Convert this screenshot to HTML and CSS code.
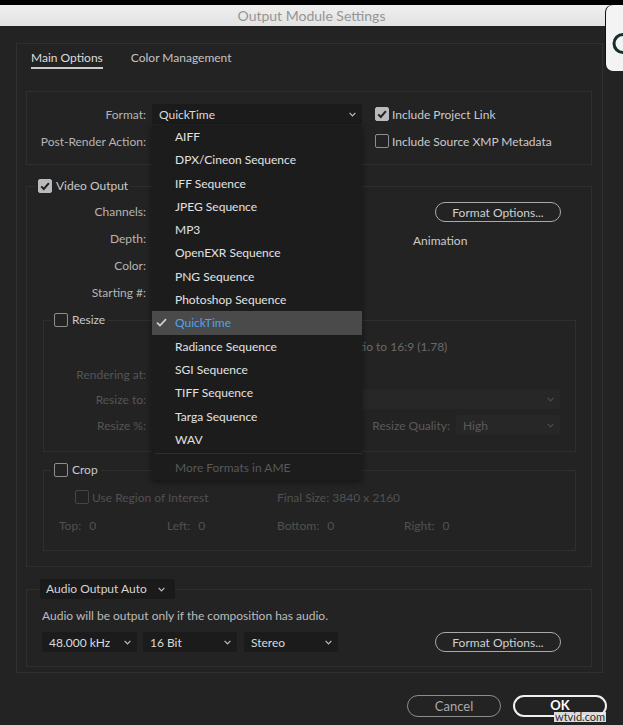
FILE: index.html
```html
<!DOCTYPE html>
<html lang="en">
<head>
<meta charset="utf-8">
<title>Output Module Settings</title>
<link rel="stylesheet" href="styles.css">
</head>
<body>
<div class="screen">
  <div class="topstrip"></div>
  <div class="titlebar">Output Module Settings</div>
  <div class="dialog">
    <div class="panel">
      <div class="tabs">
        <span class="tab active">Main Options</span>
        <span class="tab">Color Management</span>
      </div>

      <div class="fmt-box">
        <div class="row">
          <span class="lbl">Format:</span>
          <div class="dd"><span>QuickTime</span><svg class="chev" width="7" height="5" viewBox="0 0 7 5"><path d="M0.6 0.8 L3.5 3.8 L6.4 0.8"/></svg></div>
          <label class="chk"><span class="cb on"><svg width="14" height="14" viewBox="0 0 14 14"><path d="M3.2 7.4 L5.8 10 L10.9 4.2"/></svg></span>Include Project Link</label>
        </div>
        <div class="row">
          <span class="lbl">Post-Render Action:</span>
          <div class="dd"></div>
          <label class="chk"><span class="cb"></span>Include Source XMP Metadata</label>
        </div>
      </div>

      <fieldset class="video">
        <legend><span class="cb on"><svg width="14" height="14" viewBox="0 0 14 14"><path d="M3.2 7.4 L5.8 10 L10.9 4.2"/></svg></span>Video Output</legend>
        <div class="vtop">
          <div class="vcol">
            <div class="row"><span class="lbl">Channels:</span><div class="dd"></div></div>
            <div class="row"><span class="lbl">Depth:</span><div class="dd"></div></div>
            <div class="row"><span class="lbl">Color:</span><div class="dd"></div></div>
            <div class="row"><span class="lbl">Starting #:</span><div class="dd"></div></div>
          </div>
          <div class="vright">
            <button class="btn fmt-btn">Format Options...</button>
            <div class="codec">Animation</div>
          </div>
        </div>

        <fieldset class="sub resize">
          <legend><span class="cb"></span>Resize</legend>
          <div class="rz-row first">
            <span class="lbl"></span>
            <span class="cb dim lock"></span><span class="lock-txt">Lock Aspect Ratio to 16:9 (1.78)</span>
          </div>
          <div class="rz-row r2"><span class="lbl">Rendering at:</span></div>
          <div class="rz-row r3"><span class="lbl">Resize to:</span>
            <div class="dd dis wide"><span></span><svg class="chev" width="7" height="5" viewBox="0 0 7 5"><path d="M0.6 0.8 L3.5 3.8 L6.4 0.8"/></svg></div>
          </div>
          <div class="rz-row r4"><span class="lbl">Resize %:</span>
            <div class="rq">
              <span class="rq-lbl">Resize Quality:</span>
              <div class="dd dis small"><span>High</span><svg class="chev" width="7" height="5" viewBox="0 0 7 5"><path d="M0.6 0.8 L3.5 3.8 L6.4 0.8"/></svg></div>
            </div>
          </div>
        </fieldset>

        <fieldset class="sub crop">
          <legend><span class="cb"></span>Crop</legend>
          <div class="cr-row c1">
            <span class="roi"><span class="cb dim"></span>Use Region of Interest</span>
            <span>Final Size: 3840 x 2160</span>
          </div>
          <div class="cr-row c2">
            <span>Top:<b>0</b></span>
            <span>Left:<b>0</b></span>
            <span>Bottom:<b>0</b></span>
            <span>Right:<b>0</b></span>
          </div>
        </fieldset>
      </fieldset>

      <fieldset class="audio">
        <legend>
          <div class="dd aud-dd"><span>Audio Output Auto</span><svg class="chev" width="7" height="5" viewBox="0 0 7 5"><path d="M0.6 0.8 L3.5 3.8 L6.4 0.8"/></svg></div>
        </legend>
        <div class="aud-body">
          <div class="aud-note">Audio will be output only if the composition has audio.</div>
          <div class="aud-row">
            <div class="dd a1"><span>48.000 kHz</span><svg class="chev" width="7" height="5" viewBox="0 0 7 5"><path d="M0.6 0.8 L3.5 3.8 L6.4 0.8"/></svg></div>
            <div class="dd a2"><span>16 Bit</span><svg class="chev" width="7" height="5" viewBox="0 0 7 5"><path d="M0.6 0.8 L3.5 3.8 L6.4 0.8"/></svg></div>
            <div class="dd a3"><span>Stereo</span><svg class="chev" width="7" height="5" viewBox="0 0 7 5"><path d="M0.6 0.8 L3.5 3.8 L6.4 0.8"/></svg></div>
            <button class="btn fmt-btn aud-btn">Format Options...</button>
          </div>
        </div>
      </fieldset>
    </div>

    <div class="actions">
      <button class="btn cancel">Cancel</button>
      <button class="btn ok">OK</button>
    </div>
  </div>

  <ul class="menu">
    <li>AIFF</li>
    <li>DPX/Cineon Sequence</li>
    <li>IFF Sequence</li>
    <li>JPEG Sequence</li>
    <li>MP3</li>
    <li>OpenEXR Sequence</li>
    <li>PNG Sequence</li>
    <li>Photoshop Sequence</li>
    <li class="sel"><svg class="tick" width="11" height="9" viewBox="0 0 11 9"><path d="M1 4.6 L4 7.6 L10 1.2"/></svg>QuickTime</li>
    <li>Radiance Sequence</li>
    <li>SGI Sequence</li>
    <li>TIFF Sequence</li>
    <li>Targa Sequence</li>
    <li>WAV</li>
    <li class="sep"></li>
    <li class="more">More Formats in AME</li>
  </ul>

  <div class="notice"><svg width="17" height="66" viewBox="0 0 17 66"><path d="M17 29.5 A9 9 0 0 0 17 47.5" fill="none" stroke="#14302e" stroke-width="3"/></svg></div>
  <span class="watermark">wtvid.com</span>
</div>
</body>
</html>
```
FILE: styles.css
```css
* { box-sizing: border-box; }
html, body { margin: 0; padding: 0; }
body {
  background: #232323;
  font-family: Lato, "Noto Sans", sans-serif;
  font-size: 12px;
  color: #b5b5b5;
}
.screen {
  position: relative;
  width: 623px;
  height: 725px;
  overflow: hidden;
  background: #232323;
}
.topstrip { height: 5px; background: #000; }
.titlebar {
  height: 21px;
  line-height: 21px;
  text-align: center;
  background: linear-gradient(#efefef, #e2e2e2);
  color: #959595;
  font-size: 14px;
}
.dialog { padding: 17px 0 0 16px; }
.panel {
  width: 587px;
  border: 1px solid #303030;
  padding-bottom: 5px;
}

/* tabs */
.tabs {
  display: flex;
  gap: 28px;
  padding: 6px 0 0 14px;
  line-height: 16px;
}
.tab {
  padding-bottom: 1px;
  border-bottom: 2px solid transparent;
  color: #c4c4c4;
}
.tab.active { color: #dcdcdc; border-bottom-color: #cacaca; }

/* generic */
.row { display: flex; align-items: center; height: 20px; }
.lbl { width: 119px; text-align: right; flex: none; white-space: nowrap; }
.dd {
  display: flex;
  align-items: center;
  justify-content: space-between;
  height: 20px;
  background: #1b1b1b;
  border-radius: 2px;
  padding: 0 6px 0 7px;
  color: #dadada;
  flex: none;
  white-space: nowrap;
}
.chev path { fill: none; stroke: #bdbdbd; stroke-width: 1.2; }
.cb {
  width: 14px;
  height: 14px;
  flex: none;
  border: 1.5px solid #8e8e8e;
  border-radius: 2px;
  display: inline-block;
}
.cb.on { background: #bababa; border-color: #bababa; }
.cb.on svg { display: block; margin: -1.5px; }
.cb.on path { fill: none; stroke: #202020; stroke-width: 2; }
.cb.dim { border-color: #454545; }

.btn {
  height: 20px;
  padding: 0;
  border: 1.5px solid #a9a9a9;
  border-radius: 11px;
  background: transparent;
  color: #d0d0d0;
  font: inherit;
  flex: none;
}

/* format box */
.fmt-box {
  margin: 22px 10px 0 9px;
  border: 1px solid #2f2f2f;
  padding: 12px 0 13px;
  display: flex;
  flex-direction: column;
  gap: 7px;
}
.fmt-box .dd { width: 210px; margin-left: 6px; }
.chk {
  display: flex;
  align-items: center;
  gap: 3px;
  margin-left: 13px;
  color: #cacaca;
  white-space: nowrap;
}

/* fieldsets */
fieldset {
  margin: 0;
  padding: 0;
  border: 1px solid #2f2f2f;
  min-width: 0;
}
legend {
  display: flex;
  align-items: center;
  gap: 4px;
  padding: 0 3px;
  line-height: 14px;
  color: #c9c9c9;
}
.video {
  margin: 14px 10px 0 9px;
  padding: 8px 15px 15px 0;
}
.video > legend { margin-left: 8px; }
.vtop { display: flex; }
.vcol { width: 335px; display: flex; flex-direction: column; gap: 7px; }
.vcol .dd { width: 200px; margin-left: 6px; }
.vright { margin-left: 51px; }
.fmt-btn { width: 126px; }
.vright .fmt-btn { margin: 1px 0 0 22px; display: block; }
.codec { margin-top: 11px; line-height: 16px; color: #cbcbcb; }

.sub { margin: 11px 0 0 16px; }
.sub > legend { margin-left: 7px; }
.resize { padding: 9px 0 16px; }
.rz-row { display: flex; align-items: center; height: 20px; color: #555; }
.rz-row .lbl { width: 102px; }
.rz-row.first { margin-bottom: 8px; }
.rz-row.r3 { margin-top: 5px; }
.rz-row.r4 { margin-top: 6px; }
.lock { margin-left: 116px; }
.lock-txt { margin-left: 3px; color: #6a6a6a; white-space: nowrap; }
.dd.dis { background: #272727; color: #5a5a5a; }
.dd.dis .chev path { stroke: #4c4c4c; }
.dd.wide { width: 408px; margin-left: 6px; }
.rq {
  width: 408px;
  margin-left: 6px;
  display: flex;
  align-items: center;
  justify-content: flex-end;
}
.rq-lbl { color: #5a5a5a; white-space: nowrap; }
.dd.small { width: 104px; margin-left: 6px; }

.crop { padding: 10px 0 15px; }
.cr-row { display: grid; align-items: center; height: 20px; color: #515151; white-space: nowrap; }
.cr-row.c1 { grid-template-columns: 202px auto; padding-left: 31px; }
.cr-row.c2 { grid-template-columns: 108px 110px 127px auto; padding-left: 15px; margin-top: 8px; }
.cr-row b { font-weight: 400; margin-left: 8px; }
.roi { display: flex; align-items: center; gap: 3px; }

.audio {
  margin: 12px 10px 0 9px;
  padding: 9px 30px 14px 0;
}
.audio > legend { margin-left: 13px; padding: 0; line-height: 20px; }
.aud-dd { width: 135px; background: #1a1a1a; color: #d4d4d4; padding: 0 6px 0 6px; }
.aud-dd .chev { margin-right: 4px; }
.aud-body { padding-left: 15px; }
.aud-note { line-height: 16px; color: #bcbcbc; white-space: nowrap; }
.aud-row { display: flex; align-items: center; margin-top: 8px; }
.aud-row .a1 { width: 95px; }
.aud-row .a2 { width: 94px; margin-left: 6px; }
.aud-row .a3 { width: 94px; margin-left: 7px; }
.aud-row .dd { padding: 0 6px 0 7px; }
.aud-btn { margin-left: auto; }

/* actions */
.actions {
  display: flex;
  justify-content: flex-end;
  gap: 12px;
  margin-top: 22px;
  padding-right: 16px;
}
.cancel { width: 94px; height: 22px; border-color: #8c8c8c; color: #a9a9a9; font-size: 13px; }
.ok {
  width: 94px;
  height: 22px;
  padding-bottom: 3px;
  border: 2px solid #f0f0f0;
  color: #fff;
  font-weight: 700;
  font-size: 13px;
}

/* dropdown menu overlay */
.menu {
  position: absolute;
  left: 152px;
  top: 125px;
  width: 210px;
  margin: 0;
  padding: 0 0 1px;
  list-style: none;
  background: #1c1c1c;
  box-shadow: 0 2px 6px rgba(0, 0, 0, 0.45);
}
.menu li {
  position: relative;
  height: 23.3px;
  line-height: 23.3px;
  padding-left: 23px;
  color: #e2e2e2;
  white-space: nowrap;
}
.menu li.sel { background: #4a4a4a; color: #4ea4e6; }
.tick { position: absolute; left: 4px; top: 7px; }
.tick path { fill: none; stroke: #d2d2d2; stroke-width: 1.7; }
.menu li.sep { height: 1px; margin: 2px 0 2px 3px; background: #2f2f2f; }
.menu li.more { color: #585858; }

.notice {
  position: absolute;
  top: 5px;
  left: 606px;
  width: 20px;
  height: 66px;
  background: #f3f3f3;
  border-radius: 7px 0 0 7px;
  box-shadow: -1px 0 0 #111;
}
.notice svg { display: block; }
.watermark {
  position: absolute;
  left: 554px;
  top: 712px;
  font-size: 11px;
  line-height: 10px;
  padding: 0 1px;
  color: #2b2b2b;
  background: rgba(238, 238, 238, 0.9);
}
```
